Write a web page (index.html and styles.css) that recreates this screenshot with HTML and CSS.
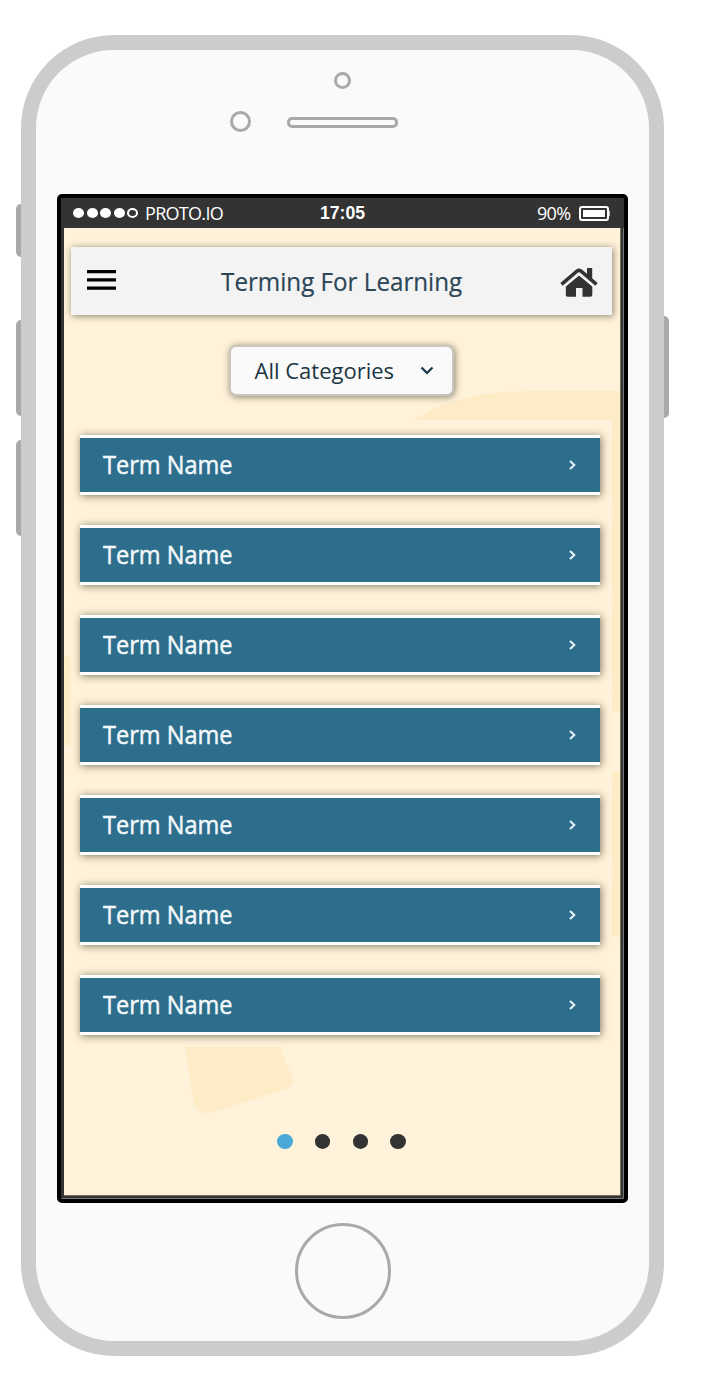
FILE: index.html
```
<!DOCTYPE html>
<html lang="en">
<head>
<meta charset="utf-8">
<title>Terming For Learning</title>
<link rel="stylesheet" href="styles.css">
</head>
<body>
<div class="phone">
  <span class="key key-mute"></span>
  <span class="key key-up"></span>
  <span class="key key-down"></span>
  <span class="key key-power"></span>
  <div class="camera"></div>
  <div class="ear"><span class="sensor"></span><span class="speaker"></span></div>
  <div class="screen">
    <div class="status">
      <div class="signal"><i></i><i></i><i></i><i></i><i class="empty"></i></div>
      <span class="carrier">PROTO.IO</span>
      <span class="time">17:05</span>
      <span class="charge">90%</span>
      <svg class="battery" width="31" height="16" viewBox="0 0 31 16"><rect x="1" y="2" width="28" height="13" rx="2" fill="none" stroke="#fff" stroke-width="2"/><rect x="4" y="5" width="22" height="7" fill="#fff"/><path d="M30 6v5" stroke="#fff" stroke-width="1.4"/></svg>
    </div>
    <div class="app">
      <svg class="backdrop" width="556" height="967" viewBox="0 0 556 967">
        <path d="M350 192C379 173 415 163 470 163H556V484H548V192Z"/>
        <path d="M548 543h8v166h-8zM0 427h3q4 0 4 5v85H0z"/>
        <path d="M121 819H216L229 851Q230 858 222 861L146 885Q134 887 130 875Z"/>
      </svg>
      <header class="bar">
        <svg class="menu" width="29" height="20" viewBox="0 0 29 20"><path d="M0 0h29v3.300H0zM0 8.300h29v3.300H0zM0 16.400h29v3.300H0z"/></svg>
        <h1 class="title">Terming For Learning</h1>
        <svg width="38" height="30" viewBox="0 0 38 30" fill="#333"><path d="M19 8.500 32.300 19.500V28Q32.300 29.800 30.500 29.800H22.500V21H16V29.800H7.500Q5.800 29.800 5.800 28V19.500Z"/><path d="M1.500 17.300 17.200 4Q19 2.700 20.800 4L36.500 17.300" fill="none" stroke="#333" stroke-width="3.600"/><path d="M27 1h5.200v11.500l-5.200-4.500z"/><path d="M4.500 19.300 19 7.200 33.500 19.300" fill="none" stroke="#f3f3f3" stroke-width="1.200"/></svg>
      </header>
      <div class="select"><span class="choice">All Categories</span><svg width="14" height="9" viewBox="0 0 14 9"><path d="M1.500 1.500 7 7 12.500 1.500" fill="none" stroke="#1b3644" stroke-width="2.200"/></svg></div>
      <ul class="terms">
        <li class="term"><span class="name">Term Name</span><svg width="7" height="10" viewBox="0 0 7 10"><path d="M1 1 5.300 5 1 9"/></svg></li>
        <li class="term"><span class="name">Term Name</span><svg width="7" height="10" viewBox="0 0 7 10"><path d="M1 1 5.300 5 1 9"/></svg></li>
        <li class="term"><span class="name">Term Name</span><svg width="7" height="10" viewBox="0 0 7 10"><path d="M1 1 5.300 5 1 9"/></svg></li>
        <li class="term"><span class="name">Term Name</span><svg width="7" height="10" viewBox="0 0 7 10"><path d="M1 1 5.300 5 1 9"/></svg></li>
        <li class="term"><span class="name">Term Name</span><svg width="7" height="10" viewBox="0 0 7 10"><path d="M1 1 5.300 5 1 9"/></svg></li>
        <li class="term"><span class="name">Term Name</span><svg width="7" height="10" viewBox="0 0 7 10"><path d="M1 1 5.300 5 1 9"/></svg></li>
        <li class="term"><span class="name">Term Name</span><svg width="7" height="10" viewBox="0 0 7 10"><path d="M1 1 5.300 5 1 9"/></svg></li>
      </ul>
      <div class="pager"><i class="current"></i><i></i><i></i><i></i></div>
    </div>
  </div>
  <div class="home"></div>
</div>
</body>
</html>
```
FILE: styles.css
```
* { box-sizing: border-box; }
body { margin: 0; padding: 35px 0 34px 21px; background: #fff; font-family: "Open Sans", "Noto Sans", sans-serif; }
.phone { position: relative; width: 643px; height: 1321px; border: 15px solid #ccc; border-radius: 93px; background: #fafafa; padding-top: 22px; }
.key { position: absolute; width: 5px; left: -20px; background: #a9a9a9; border-radius: 5px 0 0 5px; }
.key-mute { top: 154px; height: 53px; }
.key-up { top: 270px; height: 96px; }
.key-down { top: 390px; height: 96px; }
.key-power { top: 266px; height: 102px; left: 628px; border-radius: 0 5px 5px 0; }
.camera { width: 17px; height: 17px; margin: 0 auto; border: 3px solid #a9a9a9; border-radius: 50%; }
.ear { display: flex; align-items: center; gap: 36px; margin: 22px 0 0 194px; height: 21px; }
.sensor { width: 21px; height: 21px; border: 3px solid #a9a9a9; border-radius: 50%; }
.speaker { width: 111px; height: 11px; margin-top: 2px; border: 3px solid #a9a9a9; border-radius: 5px; }
.screen { width: 571px; height: 1009px; margin: 62px 0 0 21px; border: 4px solid #000; border-radius: 5px; background: #333; box-shadow: inset -1px -1px #777; }
.status { display: flex; align-items: center; height: 30px; padding: 0 14px 0 12px; background: #333; color: #fff; font-size: 18px; line-height: 30px; }
.signal { display: flex; gap: 2.500px; width: 72px; }
.signal i { width: 11px; height: 10px; border-radius: 50%; background: #fff; }
.signal .empty { background: none; border: 2px solid #fff; }
.carrier { width: 175px; letter-spacing: -0.700px; }
.time { width: 217px; font: bold 17.600px/30px "Liberation Sans", sans-serif; }
.charge { width: 42px; letter-spacing: -0.700px; }
.battery { flex: none; }
.app { position: relative; display: flex; flex-direction: column; width: 557px; height: 968px; margin-left: 3px; padding: 19px 20px 0 7px; border: solid #77705f; border-width: 0 1px 1px 0; background: #fef2da; }
.backdrop { position: absolute; left: 0; top: 0; fill: #feecc7; }
.bar { position: relative; flex: none; display: flex; align-items: center; justify-content: space-between; width: 541px; height: 68px; padding: 0 14px 0 16px; background: #f3f3f3; box-shadow: 1px 1px 7px rgba(60, 50, 30, .6); }
.bar svg { margin-top: 1px; }
.bar .menu { margin: 0 0 2px; }
.title { margin: 0 0 1px; font-size: 26px; font-weight: 400; line-height: 36px; color: #2b4656; white-space: nowrap; transform: translateX(4px) scaleX(.93); -webkit-text-stroke: .2px #2b4656; }
.select { position: relative; flex: none; display: flex; align-items: center; justify-content: space-between; width: 225px; height: 51px; margin: 30px 0 0 158px; padding: 0 18px 1px 23.500px; border: 2px solid #c9c5bf; border-radius: 7px; background: #fafafa; box-shadow: 1px 1px 7px rgba(60, 50, 30, .6); }
.choice { font-size: 22px; line-height: 30px; color: #1b3644; white-space: nowrap; }
.terms { position: relative; flex: none; display: grid; gap: 30px; margin: 39px 0 0 9px; padding: 0; width: 520px; list-style: none; }
.term { display: flex; align-items: center; justify-content: space-between; height: 60px; padding: 0 24px 0 23px; border: solid #fff; border-width: 3px 0; background: #2c6e8c; box-shadow: 1px 1px 8px rgba(60, 50, 30, .65); }
.term svg { fill: none; stroke: #e8f4fa; stroke-width: 2; }
.name { padding-bottom: 2px; font-size: 26px; line-height: 36px; color: #f2f8fb; white-space: nowrap; transform: scaleX(.905); transform-origin: left; -webkit-text-stroke: .5px #f2f8fb; }
.pager { position: relative; display: flex; gap: 22.300px; margin: 99px 0 0 206px; }
.pager i { width: 15.500px; height: 15px; border-radius: 50%; background: #333; }
.pager .current { background: #48a8d8; }
.home { width: 96px; height: 96px; margin: 20px 0 0 259px; border: 3px solid #a9a9a9; border-radius: 50%; }
```
